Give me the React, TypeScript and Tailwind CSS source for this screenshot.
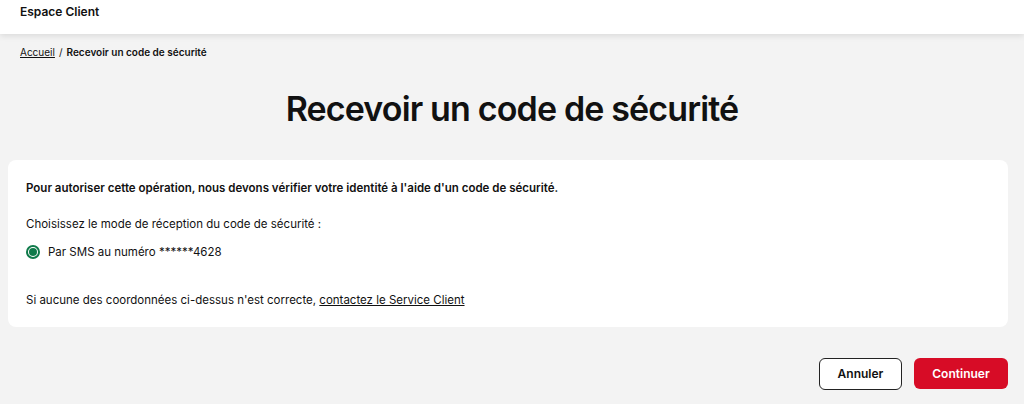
export default function App() {
  return (
    <div
      className="w-full min-h-[404px] bg-[#f3f3f3] text-[#111111]"
      style={{ fontFamily: "Inter, 'Open Sans', sans-serif" }}
    >
      {/* Header */}
      <header className="h-[34px] bg-white shadow-[0_2px_6px_rgba(0,0,0,0.10)] flex items-start pt-[4px] px-5">
        <span className="text-[12px] font-semibold leading-[16px]">Espace Client</span>
      </header>

      {/* Breadcrumb */}
      <nav className="px-5 pt-[11px] text-[10px] flex items-center gap-1">
        <a href="#" className="underline">Accueil</a>
        <span>/</span>
        <span className="font-semibold">Recevoir un code de sécurité</span>
      </nav>

      {/* Title */}
      <h1 className="text-center text-[34px] font-semibold tracking-tight mt-[28px] leading-[42px]">
        Recevoir un code de sécurité
      </h1>

      {/* Card */}
      <section className="mx-2 mr-4 mt-[30px] bg-white rounded-lg px-[18px] pt-[20px] pb-[18px] text-[11.5px]">
        <p className="font-semibold">
          Pour autoriser cette opération, nous devons vérifier votre identité à l'aide d'un code de sécurité.
        </p>
        <p className="mt-[19px]">Choisissez le mode de réception du code de sécurité :</p>
        <label className="mt-[10px] flex items-center gap-[8px]">
          <span className="w-[14px] h-[14px] rounded-full border-2 border-[#0f7a4a] flex items-center justify-center">
            <span className="w-[8px] h-[8px] rounded-full bg-[#0f7a4a]" />
          </span>
          <span>Par SMS au numéro ******4628</span>
        </label>
        <p className="mt-[31px]">
          Si aucune des coordonnées ci-dessus n'est correcte,{" "}
          <a href="#" className="underline">contactez le Service Client</a>
        </p>
      </section>

      {/* Actions */}
      <div className="flex justify-end gap-3 mr-4 mt-[31px] pb-4">
        <button className="h-[32px] w-[83px] rounded-md border border-[#222222] bg-white text-[12px] font-semibold">
          Annuler
        </button>
        <button className="h-[31px] w-[94px] rounded-md bg-[#d70c26] text-white text-[12px] font-semibold">
          Continuer
        </button>
      </div>
    </div>
  );
}
